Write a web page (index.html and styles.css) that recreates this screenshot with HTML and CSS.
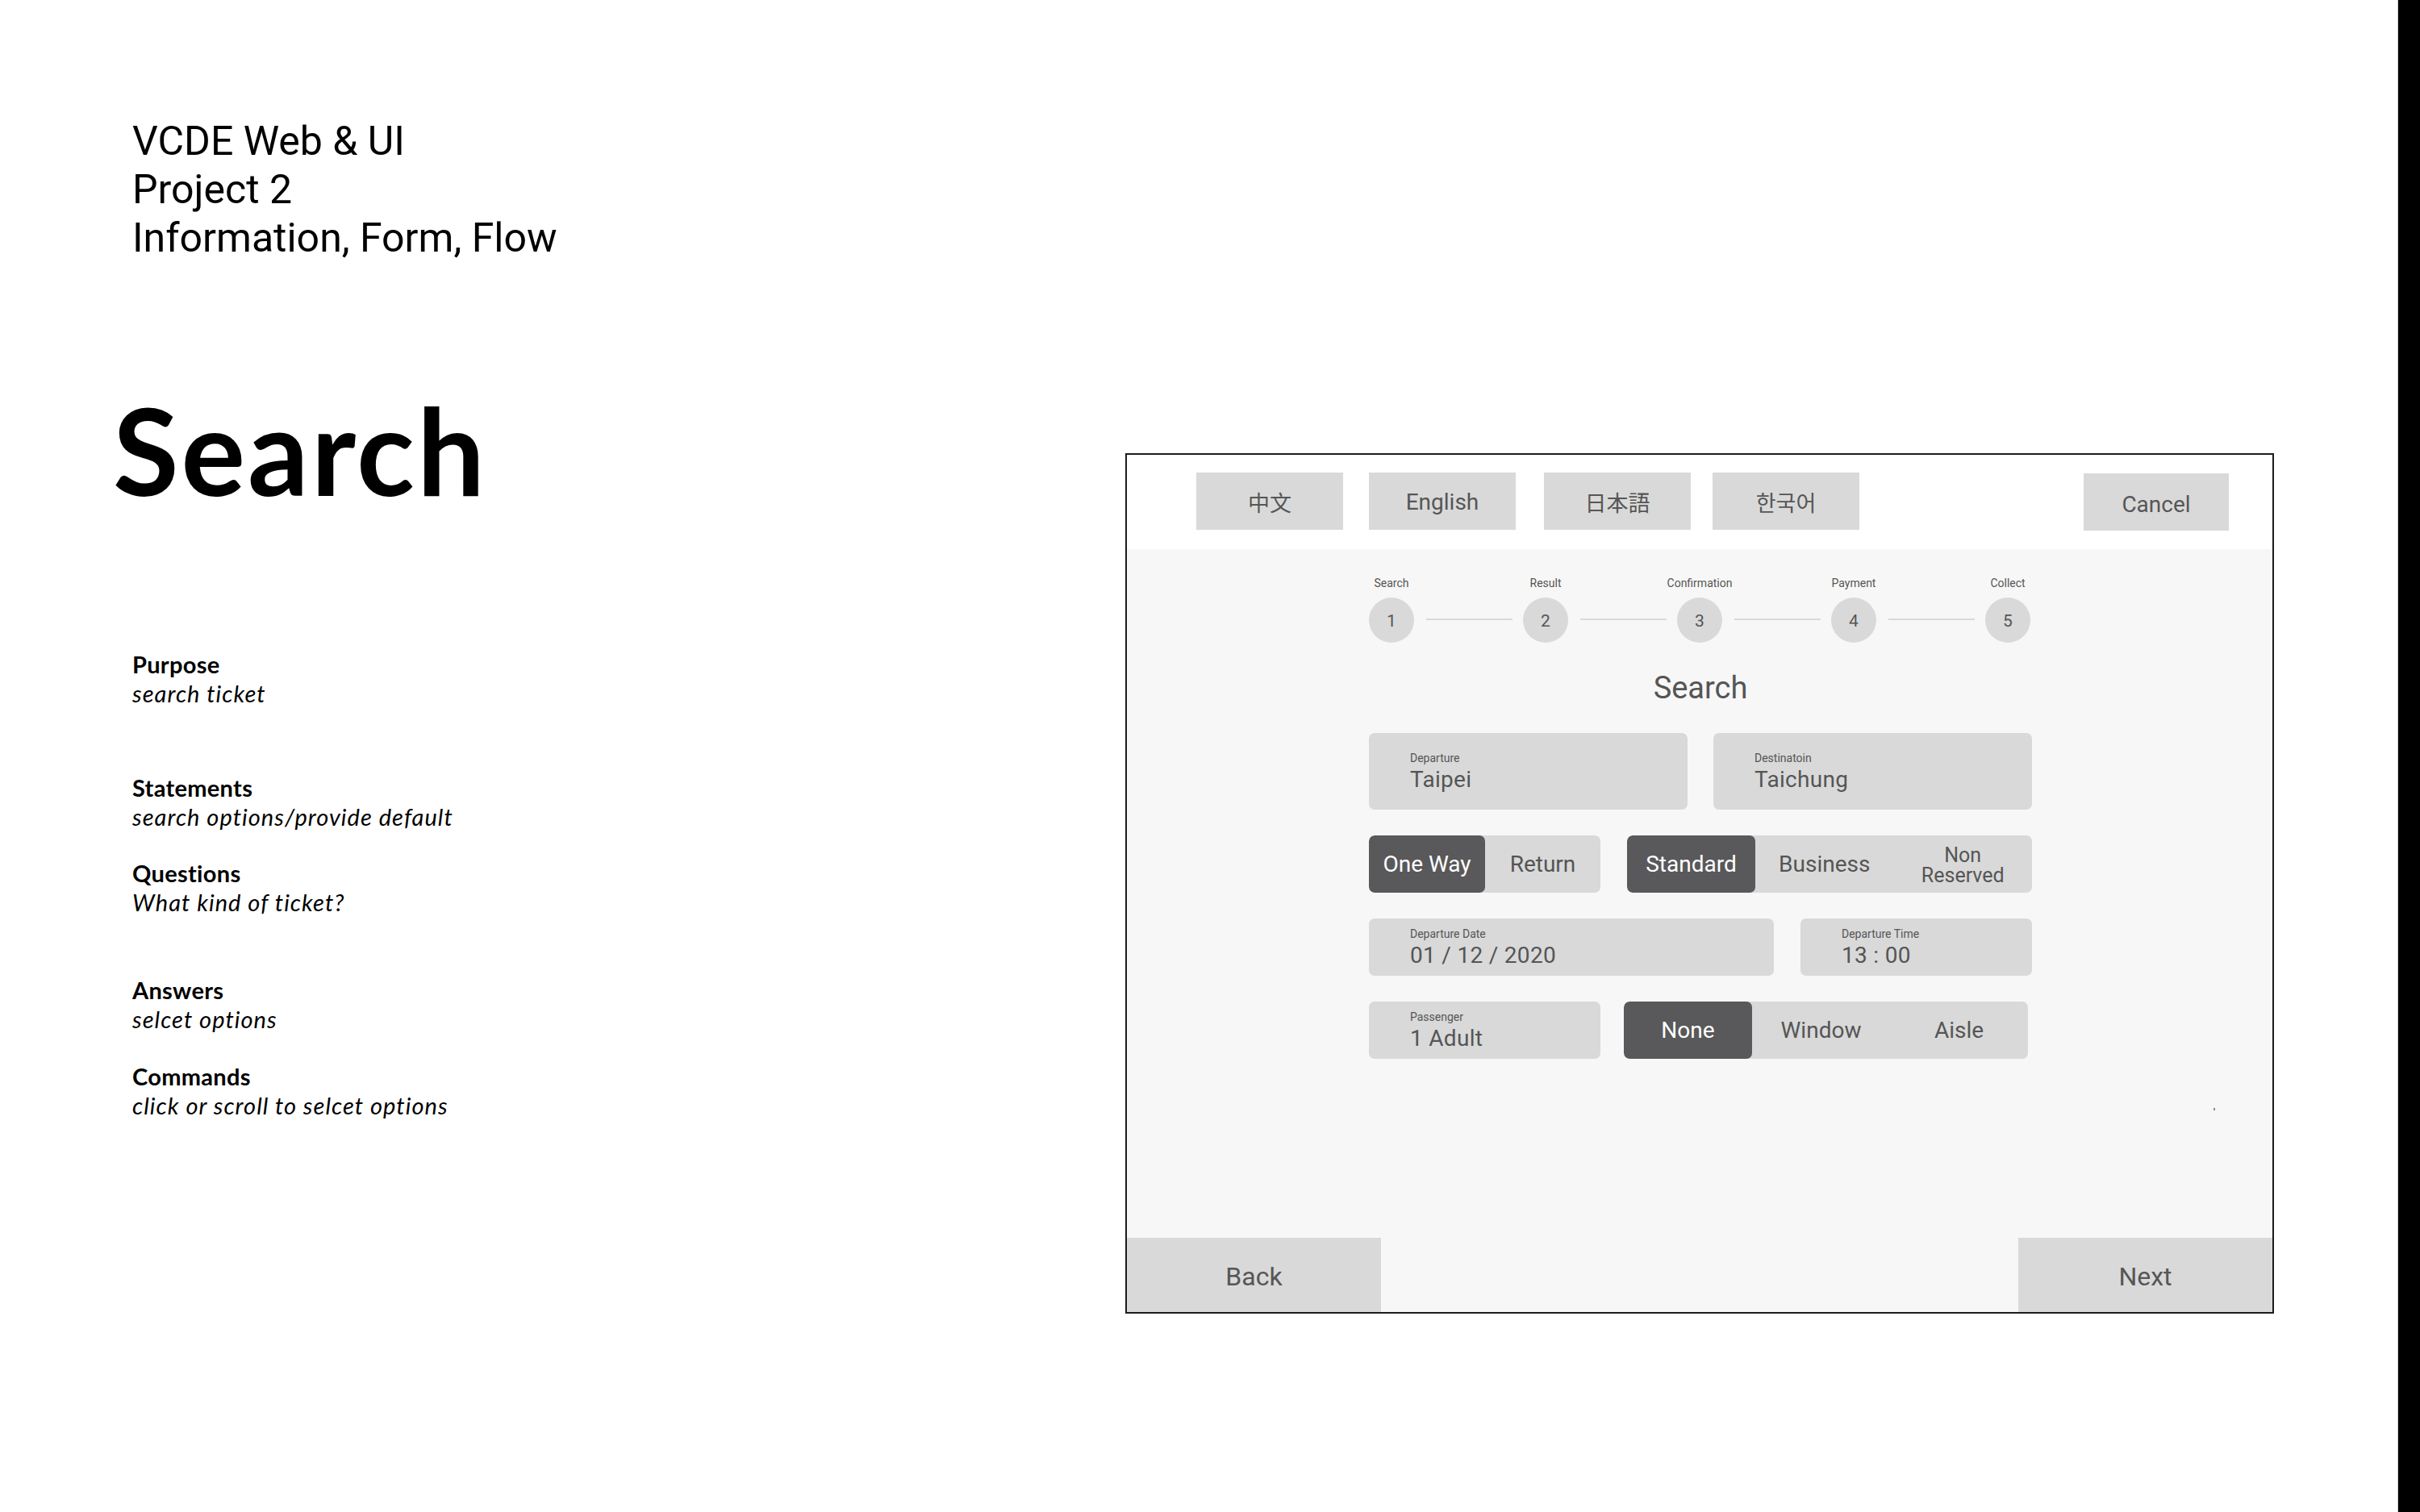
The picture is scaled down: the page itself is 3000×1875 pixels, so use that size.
FILE: index.html
```html
<!DOCTYPE html>
<html lang="en">
<head>
<meta charset="utf-8">
<title>VCDE Web &amp; UI – Search</title>
<link rel="stylesheet" href="styles.css">
</head>
<body>
<div class="page">
  <aside class="notes">
    <div class="course">
      <div>VCDE Web &amp; UI</div>
      <div>Project 2</div>
      <div>Information, Form, Flow</div>
    </div>
    <h1 class="title">Search</h1>
    <dl class="defs">
      <div class="def def-1"><dt>Purpose</dt><dd>search ticket</dd></div>
      <div class="def def-2"><dt>Statements</dt><dd>search options/provide default</dd></div>
      <div class="def def-3"><dt>Questions</dt><dd>What kind of ticket?</dd></div>
      <div class="def def-4"><dt>Answers</dt><dd>selcet options</dd></div>
      <div class="def def-5"><dt>Commands</dt><dd>click or scroll to selcet options</dd></div>
    </dl>
  </aside>

  <main class="stage">
    <div class="kiosk">
      <header class="kiosk-head">
        <div class="langs">
          <button class="btn lang" lang="zh-Hant">中文</button>
          <button class="btn lang">English</button>
          <button class="btn lang" lang="ja">日本語</button>
          <button class="btn lang" lang="ko">한국어</button>
        </div>
        <button class="btn cancel">Cancel</button>
      </header>

      <section class="kiosk-body">
        <div class="content">
          <ol class="stepper">
            <li class="step"><span class="step-label">Search</span><span class="step-dot">1</span></li>
            <li class="connector"></li>
            <li class="step"><span class="step-label">Result</span><span class="step-dot">2</span></li>
            <li class="connector"></li>
            <li class="step"><span class="step-label">Confirmation</span><span class="step-dot">3</span></li>
            <li class="connector"></li>
            <li class="step"><span class="step-label">Payment</span><span class="step-dot">4</span></li>
            <li class="connector"></li>
            <li class="step"><span class="step-label">Collect</span><span class="step-dot">5</span></li>
          </ol>

          <h2 class="heading">Search</h2>

          <div class="row row-stations">
            <div class="field field-tall w-half"><span class="f-label">Departure</span><span class="f-value">Taipei</span></div>
            <div class="field field-tall w-half"><span class="f-label">Destinatoin</span><span class="f-value">Taichung</span></div>
          </div>

          <div class="row">
            <div class="toggle w-small">
              <span class="opt opt-a on">One Way</span>
              <span class="opt">Return</span>
            </div>
            <div class="toggle w-large">
              <span class="opt opt-b on">Standard</span>
              <span class="opt">Business</span>
              <span class="opt two-line">Non<br>Reserved</span>
            </div>
          </div>

          <div class="row">
            <div class="field w-large"><span class="f-label">Departure Date</span><span class="f-value">01 / 12 / 2020</span></div>
            <div class="field w-small"><span class="f-label">Departure Time</span><span class="f-value">13 : 00</span></div>
          </div>

          <div class="row row-last">
            <div class="field w-small"><span class="f-label">Passenger</span><span class="f-value">1 Adult</span></div>
            <div class="toggle w-seat">
              <span class="opt opt-b on">None</span>
              <span class="opt">Window</span>
              <span class="opt">Aisle</span>
            </div>
          </div>
        </div>

        <span class="speck"></span>

        <footer class="kiosk-foot">
          <button class="btn nav">Back</button>
          <button class="btn nav">Next</button>
        </footer>
      </section>
    </div>
  </main>

  <div class="edge"></div>
</div>
</body>
</html>
```

FILE: styles.css
```css
* { box-sizing: border-box; }

html, body {
  margin: 0;
  padding: 0;
  background: #ffffff;
}

body {
  width: 3000px;
  height: 1875px;
  overflow: hidden;
  font-family: Roboto, "Liberation Sans", sans-serif;
  color: #000;
}

.page {
  display: flex;
  height: 1875px;
}

/* ---------- left notes column ---------- */
.notes {
  flex: none;
  width: 1395px;
  padding: 145px 0 0 164px;
}

.course {
  font-family: Roboto, "Liberation Sans", sans-serif;
  font-size: 50px;
  line-height: 60px;
  color: #000;
}

.title {
  margin: 158px 0 0 -24px;
  font-family: Lato, "Liberation Sans", sans-serif;
  font-weight: 700;
  font-size: 149px;
  line-height: 1;
  letter-spacing: 3px;
  color: #000;
}

.defs {
  margin: 174px 0 0 0;
  font-family: Lato, "Liberation Sans", sans-serif;
  font-size: 29px;
  line-height: 36px;
}

.def dt {
  font-weight: 700;
  letter-spacing: 0.3px;
}

.def dd {
  margin: 0;
  font-style: italic;
  letter-spacing: 1.05px;
}

.def-2 { margin-top: 81px; }
.def-3 { margin-top: 34px; }
.def-4 { margin-top: 73px; }
.def-5 { margin-top: 35px; }

/* ---------- stage with kiosk frame ---------- */
.stage {
  flex: 1;
  padding-top: 562px;
}

.kiosk {
  width: 1424px;
  height: 1067px;
  border: 2px solid #1c1c1c;
  display: flex;
  flex-direction: column;
  color: #565656;
}

.btn {
  font-family: Roboto, "Liberation Sans", sans-serif;
  border: 0;
  margin: 0;
  padding: 0;
  background: #d9d9d9;
  color: #565656;
}

.kiosk-head {
  flex: none;
  height: 117px;
  background: #ffffff;
  display: flex;
  align-items: flex-start;
  padding: 22px 54px 0 86px;
}

.langs {
  display: flex;
}

.lang {
  width: 182px;
  height: 71px;
  padding-top: 2px;
  font-size: 28px;
}

.lang:nth-child(2) { margin-left: 32px; }
.lang:nth-child(3) { margin-left: 35px; }
.lang:nth-child(4) { margin-left: 27px; }

.lang[lang="zh-Hant"] { font-family: "Noto Sans CJK TC", sans-serif; font-size: 27px; }
.lang[lang="ja"] { font-family: "Noto Sans CJK JP", sans-serif; font-size: 27px; }
.lang[lang="ko"] { font-family: "Noto Sans CJK KR", sans-serif; font-size: 27px; }

.cancel {
  margin: 1px 0 0 auto;
  width: 180px;
  height: 71px;
  padding-top: 6px;
  font-size: 28px;
}

.kiosk-body {
  position: relative;
  flex: 1;
  background: #f7f7f7;
  display: flex;
  flex-direction: column;
}

.content {
  width: 822px;
  margin-left: 300px;
  padding-top: 33px;
}

/* stepper */
.stepper {
  list-style: none;
  margin: 0;
  padding: 0;
  display: flex;
  width: 820px;
}

.step {
  flex: none;
  width: 56px;
  display: flex;
  flex-direction: column;
  align-items: center;
}

.step-label {
  display: block;
  white-space: nowrap;
  margin: 0 -60px;
  font-size: 14px;
  line-height: 18px;
  color: #555;
}

.step-dot {
  margin-top: 9px;
  width: 56px;
  height: 56px;
  border-radius: 50%;
  background: #d9d9d9;
  display: flex;
  align-items: center;
  justify-content: center;
  padding-top: 1px;
  font-size: 21px;
  color: #555;
}

.connector {
  flex: 1;
  height: 2px;
  margin: 53px 13px 0 15px;
  background: #d9d9d9;
}

.heading {
  margin: 33px 0 0 0;
  text-align: center;
  font-weight: 400;
  font-size: 38px;
  line-height: 46px;
  color: #555;
}

/* form rows */
.row {
  display: flex;
  justify-content: space-between;
  margin-top: 32px;
}

.row-stations { margin-top: 33px; }

.row-last {
  justify-content: flex-start;
  gap: 29px;
}

.w-half { width: 395px; }
.w-small { width: 287px; }
.w-large { width: 502px; }
.w-seat { width: 501px; }

.field {
  height: 71px;
  border-radius: 7px;
  background: #d9d9d9;
  display: flex;
  flex-direction: column;
  justify-content: center;
  padding-left: 51px;
}

.field-tall { height: 95px; }

.f-label {
  font-size: 14px;
  line-height: 16px;
  color: #555;
}

.f-value {
  margin-top: 4px;
  font-size: 28px;
  line-height: 30px;
  letter-spacing: 0.3px;
  color: #555;
}

.toggle {
  height: 71px;
  border-radius: 7px;
  background: #d9d9d9;
  display: flex;
  overflow: hidden;
}

.opt {
  flex: 1;
  display: flex;
  align-items: center;
  justify-content: center;
  text-align: center;
  font-size: 28px;
  line-height: 28px;
  color: #555;
}

.opt.on {
  flex: none;
  background: #59585a;
  color: #ffffff;
  border-radius: 7px;
}

.opt-a { width: 144px; }
.opt-b { width: 159px; }

.two-line {
  padding-top: 2px;
  font-size: 25px;
  line-height: 25px;
}

.speck {
  position: absolute;
  left: 1347px;
  top: 693px;
  width: 2px;
  height: 3px;
  background: #8a8a8a;
}

.kiosk-foot {
  margin-top: auto;
  display: flex;
  justify-content: space-between;
}

.nav {
  width: 315px;
  height: 92px;
  padding-top: 3px;
  font-size: 32px;
}

/* right black edge */
.edge {
  flex: none;
  width: 28px;
  height: 1875px;
  background: #000;
  border-left: 1px solid #d0d0d0;
}
```
